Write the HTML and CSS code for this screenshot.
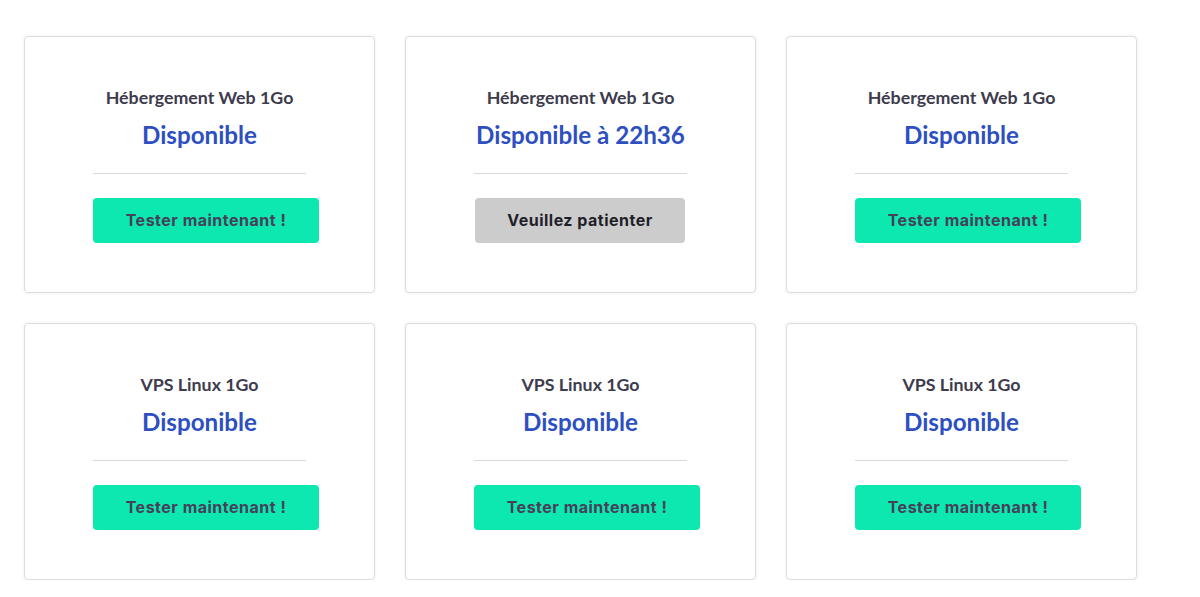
FILE: index.html
```html
<!DOCTYPE html>
<html lang="fr">
<head>
<meta charset="utf-8">
<title>Tests</title>
<link rel="stylesheet" href="styles.css">
</head>
<body>
<div class="grid">
  <div class="card">
    <div class="name">Hébergement Web 1Go</div>
    <div class="status">Disponible</div>
    <hr class="sep">
    <button class="btn">Tester maintenant !</button>
  </div>
  <div class="card">
    <div class="name">Hébergement Web 1Go</div>
    <div class="status">Disponible à 22h36</div>
    <hr class="sep">
    <button class="btn btn-wait">Veuillez patienter</button>
  </div>
  <div class="card">
    <div class="name">Hébergement Web 1Go</div>
    <div class="status">Disponible</div>
    <hr class="sep">
    <button class="btn">Tester maintenant !</button>
  </div>
  <div class="card">
    <div class="name">VPS Linux 1Go</div>
    <div class="status">Disponible</div>
    <hr class="sep">
    <button class="btn">Tester maintenant !</button>
  </div>
  <div class="card">
    <div class="name">VPS Linux 1Go</div>
    <div class="status">Disponible</div>
    <hr class="sep">
    <button class="btn">Tester maintenant !</button>
  </div>
  <div class="card">
    <div class="name">VPS Linux 1Go</div>
    <div class="status">Disponible</div>
    <hr class="sep">
    <button class="btn">Tester maintenant !</button>
  </div>
</div>
</body>
</html>
```
FILE: styles.css
```css
html, body {
  margin: 0;
  padding: 0;
  background: #ffffff;
}
body {
  font-family: "Lato", "Liberation Sans", sans-serif;
}
.grid {
  display: grid;
  grid-template-columns: repeat(3, 351px);
  column-gap: 30px;
  row-gap: 30px;
  padding: 36px 0 0 24px;
}
.card {
  box-sizing: border-box;
  height: 257px;
  border: 1px solid #dcdcdc;
  border-radius: 4px;
  box-shadow: 0 0 4px rgba(0, 0, 0, 0.06);
  background: #fff;
  padding: 50px 68px 0 68px;
  display: flex;
  flex-direction: column;
  align-items: stretch;
}
.name {
  font-weight: 700;
  font-size: 17.8px;
  line-height: 20px;
  color: #3d3b4c;
  text-align: center;
  white-space: nowrap;
}
.status {
  margin-top: 14px;
  font-weight: 700;
  font-size: 24.2px;
  line-height: 28px;
  color: #2d4fc1;
  text-align: center;
  white-space: nowrap;
}
.sep {
  margin: 24px 0 0 0;
  border: 0;
  border-top: 1px solid #d6d9dd;
  height: 0;
}
.btn {
  align-self: flex-start;
  margin-top: 24px;
  width: 226px;
  height: 45px;
  border: 0;
  border-radius: 4px;
  background: #0ce8b0;
  color: #46405a;
  font-family: "Inter", "DejaVu Sans", sans-serif;
  font-weight: 700;
  font-size: 16px;
  letter-spacing: 0.5px;
  padding: 0 0 2px 0;
}
.btn-wait {
  width: 210px;
  margin-left: 1px;
  background: #cccccc;
  color: #1f1f2a;
}
```
